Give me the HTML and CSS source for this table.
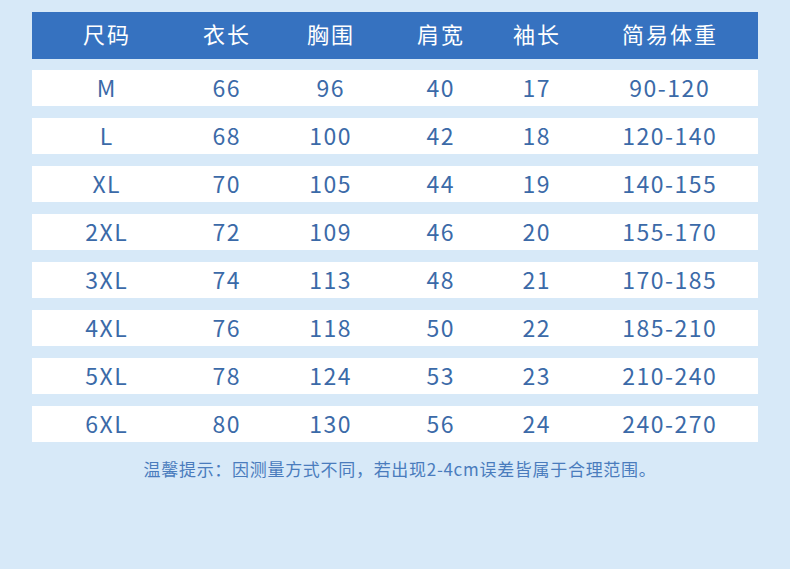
FILE: index.html
```html
<!DOCTYPE html>
<html lang="zh">
<head>
<meta charset="utf-8">
<link rel="stylesheet" href="styles.css">
</head>
<body>
<div class="page">
  <div class="table">
    <div class="row head">
      <div class="c c1">尺码</div><div class="c c2">衣长</div><div class="c c3">胸围</div><div class="c c4">肩宽</div><div class="c c5">袖长</div><div class="c c6">简易体重</div>
    </div>
    <div class="row"><div class="c c1">M</div><div class="c c2">66</div><div class="c c3">96</div><div class="c c4">40</div><div class="c c5">17</div><div class="c c6">90-120</div></div>
    <div class="row"><div class="c c1">L</div><div class="c c2">68</div><div class="c c3">100</div><div class="c c4">42</div><div class="c c5">18</div><div class="c c6">120-140</div></div>
    <div class="row"><div class="c c1">XL</div><div class="c c2">70</div><div class="c c3">105</div><div class="c c4">44</div><div class="c c5">19</div><div class="c c6">140-155</div></div>
    <div class="row"><div class="c c1">2XL</div><div class="c c2">72</div><div class="c c3">109</div><div class="c c4">46</div><div class="c c5">20</div><div class="c c6">155-170</div></div>
    <div class="row"><div class="c c1">3XL</div><div class="c c2">74</div><div class="c c3">113</div><div class="c c4">48</div><div class="c c5">21</div><div class="c c6">170-185</div></div>
    <div class="row"><div class="c c1">4XL</div><div class="c c2">76</div><div class="c c3">118</div><div class="c c4">50</div><div class="c c5">22</div><div class="c c6">185-210</div></div>
    <div class="row"><div class="c c1">5XL</div><div class="c c2">78</div><div class="c c3">124</div><div class="c c4">53</div><div class="c c5">23</div><div class="c c6">210-240</div></div>
    <div class="row"><div class="c c1">6XL</div><div class="c c2">80</div><div class="c c3">130</div><div class="c c4">56</div><div class="c c5">24</div><div class="c c6">240-270</div></div>
  </div>
  <p class="note">温馨提示：因测量方式不同，若出现2-4cm误差皆属于合理范围。</p>
</div>
</body>
</html>
```
FILE: styles.css
```css
html, body {
  margin: 0;
  padding: 0;
  background: #d7e9f8;
}
.page {
  width: 790px;
  height: 569px;
  box-sizing: border-box;
  padding: 12px 32px 0;
  font-family: "Noto Sans CJK SC", "Noto Sans", sans-serif;
}
.table {
  display: flex;
  flex-direction: column;
  gap: 12px;
}
.row {
  display: flex;
  height: 36px;
  box-sizing: border-box;
  padding-bottom: 1px;
  background: #ffffff;
  color: #3b6aa8;
  font-size: 23px;
  letter-spacing: 1.5px;
  align-items: center;
}
.row.head {
  height: 47px;
  padding-bottom: 6px;
  background: #3672c0;
  color: #ffffff;
  font-size: 22px;
  letter-spacing: 2px;
  margin-bottom: -1px;
}
.c {
  box-sizing: border-box;
  text-align: center;
  line-height: 1;
  padding-left: 1.5px;
}
.head .c {
  padding-left: 2px;
}
.c1 { width: 148px; }
.c2 { width: 92px; }
.c3 { width: 116px; }
.c4 { width: 104px; }
.c5 { width: 88px; }
.c6 { width: 178px; }
.note {
  margin: 17px 0 0;
  padding-left: 10px;
  text-align: center;
  font-size: 17px;
  letter-spacing: 0.7px;
  color: #4a7cbd;
  line-height: 20px;
}
```
